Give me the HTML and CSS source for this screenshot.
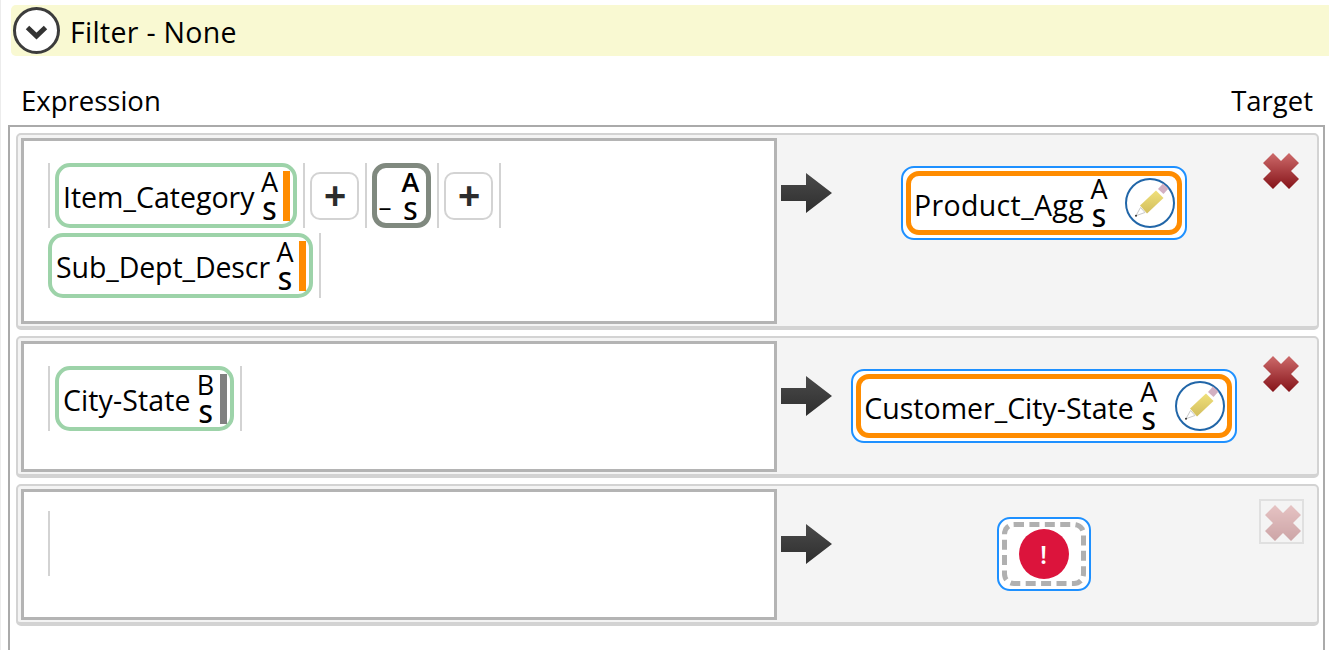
FILE: index.html
```html
<!DOCTYPE html>
<html lang="en">
<head>
<meta charset="utf-8">
<title>Filter</title>
<link rel="stylesheet" href="styles.css">
</head>
<body>
<svg class="defs" width="0" height="0" aria-hidden="true">
  <defs>
    <linearGradient id="xg" x1="0" y1="0" x2="0" y2="1"><stop offset="0" stop-color="#cd6a6a"/><stop offset="1" stop-color="#851319"/></linearGradient>
    <linearGradient id="ag" x1="0" y1="0" x2="0" y2="1"><stop offset="0" stop-color="#4a4a4a"/><stop offset="1" stop-color="#2e2e2e"/></linearGradient>
    <linearGradient id="pg" x1="0" y1="0" x2="0" y2="1"><stop offset="0" stop-color="#f0e07a"/><stop offset="1" stop-color="#d2be5e"/></linearGradient>
    <symbol id="arrow" viewBox="0 0 51 40"><path d="M0 12H25V0L51 20 25 40V28H0Z" fill="url(#ag)"/></symbol>
    <symbol id="x" viewBox="0 0 36 36"><path d="M10 0 18 8 26 0 36 10 28 18 36 26 26 36 18 28 10 36 0 26 8 18 0 10Z" fill="url(#xg)"/></symbol>
    <symbol id="pencil" viewBox="0 0 50 50">
      <circle cx="25" cy="25" r="24" fill="#fff" stroke="#2166a8" stroke-width="2"/>
      <path d="M15 27.500 31 12.500 38.500 20 22 35.500Z" fill="url(#pg)"/>
      <path d="M15.500 29.500 20 34.500 11 37.700Z" fill="#fff" stroke="#c9c9c9" stroke-width="1"/>
      <circle cx="11" cy="37.700" r="1" fill="#333"/>
      <path d="M38 5.500 43.500 10.500 38.500 16 33 11Z" fill="#d3b0c2"/>
    </symbol>
  </defs>
</svg>
<main class="page">
  <header class="banner">
    <span class="toggle"><svg viewBox="0 0 47 47" width="47" height="47"><circle cx="23.500" cy="23.500" r="22" fill="#fff" stroke="#3c3c3c" stroke-width="3"/><path d="M14.500 20.500 23.500 29 32.500 20.500" fill="none" stroke="#333" stroke-width="5"/></svg></span>
    <span class="banner-title">Filter - None</span>
  </header>
  <div class="labels"><span>Expression</span><span>Target</span></div>
  <section class="frame">
    <div class="row">
      <div class="expr">
        <i class="sep"></i>
        <div class="chip"><span class="name">Item_Category</span><span class="stack"><b>A</b><b class="s">S</b></span><i class="bar"></i></div>
        <i class="sep"></i>
        <button class="plus">+</button>
        <i class="sep"></i>
        <div class="op"><span class="dash">–</span><span class="stack"><b>A</b><b class="s">S</b></span></div>
        <i class="sep"></i>
        <button class="plus">+</button>
        <i class="sep"></i>
        <div class="chip"><span class="name tight">Sub_Dept_Descr</span><span class="stack"><b>A</b><b class="s">S</b></span><i class="bar"></i></div>
        <i class="sep"></i>
      </div>
      <div class="side">
        <svg class="arrow"><use href="#arrow"/></svg>
        <div class="target"><div class="tinner"><span class="name wide">Product_Agg</span><span class="stack"><b>A</b><b class="s">S</b></span><svg class="pencil"><use href="#pencil"/></svg></div></div>
        <div class="del"><svg class="xicon"><use href="#x"/></svg></div>
      </div>
    </div>
    <div class="row">
      <div class="expr">
        <i class="sep"></i>
        <div class="chip"><span class="name loose">City-State</span><span class="stack"><b>B</b><b class="s">S</b></span><i class="bar grey"></i></div>
        <i class="sep"></i>
      </div>
      <div class="side">
        <svg class="arrow"><use href="#arrow"/></svg>
        <div class="target"><div class="tinner"><span class="name">Customer_City-State</span><span class="stack"><b>A</b><b class="s">S</b></span><svg class="pencil"><use href="#pencil"/></svg></div></div>
        <div class="del"><svg class="xicon"><use href="#x"/></svg></div>
      </div>
    </div>
    <div class="row">
      <div class="expr empty"><i class="sep"></i></div>
      <div class="side">
        <svg class="arrow"><use href="#arrow"/></svg>
        <div class="target"><div class="tinner dashed"><span class="warn">!</span></div></div>
        <div class="del off"><svg class="xicon"><use href="#x"/></svg></div>
      </div>
    </div>
  </section>
</main>
</body>
</html>
```
FILE: styles.css
```css
html, body { margin: 0; padding: 0; background: #fff; }
body { width: 1329px; height: 650px; overflow: hidden; font-family: "Open Sans", "Noto Sans", "Liberation Sans", sans-serif; color: #000; }
.defs { position: absolute; }
.page { height: 650px; box-sizing: border-box; overflow: hidden; border-left: 1px solid #ececec; padding: 5px 0 0 10px; }
.banner { height: 51px; display: flex; align-items: center; background: #f9f9d2; border-radius: 5px 0 0 5px; }
.toggle { display: block; width: 47px; height: 47px; margin: 2px 0 0 2px; align-self: flex-start; }
.toggle svg { display: block; }
.banner-title { font-size: 28.500px; margin: 4px 0 0 10px; line-height: 47px; letter-spacing: .3px; }
.labels { display: flex; justify-content: space-between; font-size: 27.500px; line-height: 36px; margin: 27px 16px 6px 10px; }
.frame { margin: 0 4px 0 -3px; box-sizing: border-box; height: 530px; border: 2px solid #aaa; border-bottom: 0; padding: 6px 4px 0 6px; }
.row { display: flex; background: #f4f4f4; border: 2px solid #d3d3d3; border-bottom-width: 4px; border-radius: 5px; padding: 3px 0 2px 3px; margin-bottom: 6px; }
.expr { box-sizing: border-box; width: 756px; min-height: 131px; background: #fff; border: 3px solid #b4b4b4; padding: 22px 8px 23px 24px; display: flex; flex-wrap: wrap; align-items: center; align-content: flex-start; gap: 5px; }
.expr.empty { padding-top: 19px; }
.sep { display: block; width: 2px; height: 65px; background: #d3d3d3; }
.chip, .plus, .op { margin-right: 1px; }
.chip { box-sizing: border-box; height: 65px; display: flex; align-items: center; border: 4px solid #9dd3a9; border-radius: 15px; padding: 0 3px 0 4px; }
.name { font-size: 28.500px; line-height: 36px; white-space: nowrap; margin-top: 4px; }
.chip .name { margin-top: 3px; }
.name.wide { letter-spacing: .35px; }
.name.tight { letter-spacing: -.1px; }
.name.loose { letter-spacing: .1px; }
.stack { display: flex; flex-direction: column; align-items: center; width: 18px; margin-left: 6px; }
.stack b { font-weight: 400; font-size: 27px; line-height: 29px; display: block; }
.stack .s { font-weight: 600; font-size: 26px; }
.bar { display: block; width: 7px; height: 50px; margin-left: 5px; background: #ff8c00; }
.bar.grey { background: #808080; }
.plus { box-sizing: border-box; width: 49px; height: 48px; padding: 0; background: #fff; border: 2px solid #d3d3d3; border-radius: 10px; font-family: "Liberation Sans", sans-serif; font-size: 38px; font-weight: 700; line-height: 40px; color: #2c2c2c; }
.op { box-sizing: border-box; width: 59px; height: 65px; border: 5px solid #80897f; border-radius: 14px; display: flex; align-items: center; }
.dash { font-size: 26px; line-height: 24px; margin: 20px 0 0 1px; width: 15px; }
.op .stack { width: 20px; margin-left: 7px; }
.op .stack b { font-weight: 600; }
.side { flex: 1; display: grid; grid-template-columns: 61px 1fr 60px; align-items: start; padding-right: 7px; }
.arrow { display: block; width: 51px; height: 40px; margin: 35px 0 0 4px; }
.target { justify-self: center; margin-top: 28px; border: 2px solid #1e90ff; border-radius: 13px; padding: 3px; background: #fff; }
.tinner { box-sizing: border-box; height: 64px; display: flex; align-items: center; border: 5px solid #ff8c00; border-radius: 13px; padding: 0 2px 0 3px; }
.pencil { display: block; width: 50px; height: 50px; margin-left: 17px; }
.tinner.dashed { width: 84px; padding: 0; justify-content: center; border: 0; border-radius: 12px; position: relative; }
.tinner.dashed::before { content: ""; position: absolute; inset: 0; border: 5px dashed #b0b0b0; border-radius: 12px; }
.warn { display: block; width: 50px; height: 50px; margin-left: -1px; border-radius: 50%; background: #dc143c; color: #fff; font-size: 26px; font-weight: 600; line-height: 50px; text-align: center; position: relative; }
.del { justify-self: end; margin-top: 15px; }
.xicon { display: block; width: 36px; height: 36px; margin: 0 11px 0 0; }
.del.off { box-sizing: border-box; width: 45px; height: 45px; margin: 10px 6px 0 0; border: 2px solid #e0e0e0; padding: 3.500px; }
.del.off .xicon { opacity: .35; margin: 0; }
```
